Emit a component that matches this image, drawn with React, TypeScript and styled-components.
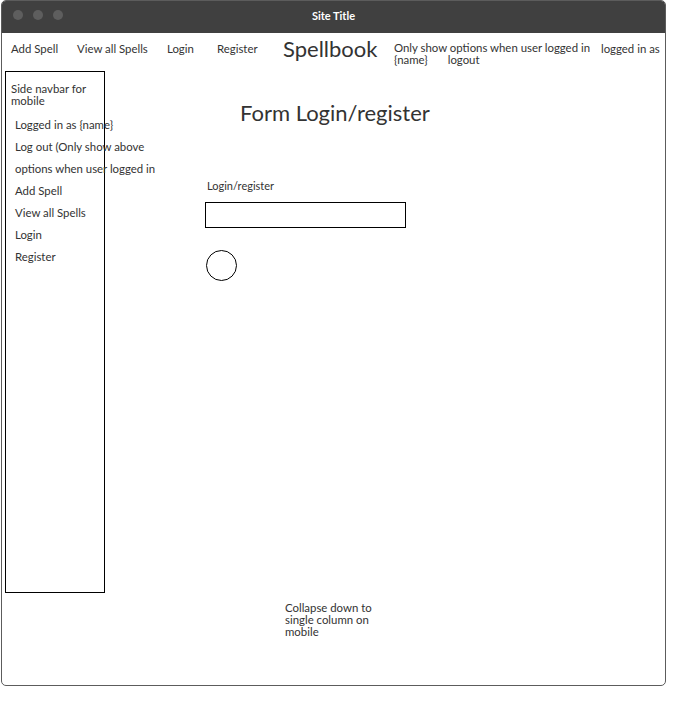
import React from "react";
import styled, { createGlobalStyle } from "styled-components";

const Global = createGlobalStyle`
  html, body { margin: 0; padding: 0; background: #ffffff; }
  body { font-family: Lato, "Noto Sans", sans-serif; color: #333333; }
`;

const Window = styled.div`
  margin-left: 1px;
  width: 665px;
  height: 686px;
  box-sizing: border-box;
  border: 1px solid #5c5c5c;
  border-radius: 5px;
  overflow: hidden;
  display: flex;
  flex-direction: column;
  background: #fff;
`;

const TitleBar = styled.div`
  height: 32px;
  flex: none;
  box-sizing: border-box;
  padding-bottom: 3px;
  background: #404040;
  position: relative;
  display: flex;
  align-items: center;
  justify-content: center;
`;

const Dots = styled.div`
  position: absolute;
  left: 11px;
  top: 9px;
  display: flex;
  gap: 10px;
`;

const Dot = styled.span`
  width: 10px;
  height: 10px;
  border-radius: 50%;
  background: #5e5e5e;
`;

const TitleText = styled.span`
  color: #ffffff;
  font-size: 11px;
  font-weight: 700;
`;

const NavRow = styled.div`
  height: 31px;
  flex: none;
  display: flex;
  align-items: center;
  padding-left: 9px;
`;

const NavItem = styled.div<{ $w: number }>`
  width: ${(p) => p.$w}px;
  flex: none;
  font-size: 11.4px;
  line-height: 14px;
  white-space: nowrap;
`;

const Brand = styled.div<{ $w: number }>`
  width: ${(p) => p.$w}px;
  flex: none;
  font-size: 22px;
  line-height: 26px;
  white-space: nowrap;
`;

const Note = styled.div<{ $w: number }>`
  width: ${(p) => p.$w}px;
  flex: none;
  align-self: flex-start;
  margin-top: 9px;
  font-size: 11.4px;
  line-height: 12px;
  white-space: nowrap;
`;

const NoteLine2 = styled.div`
  display: flex;
  gap: 20px;
`;

const Body = styled.div`
  margin-top: 7px;
  display: flex;
  align-items: flex-start;
`;

const Sidebar = styled.div`
  margin-left: 3px;
  width: 100px;
  height: 522px;
  box-sizing: border-box;
  border: 1px solid #000;
  flex: none;
  padding: 11px 0 0 5px;
`;

const SideHeader = styled.div`
  font-size: 11.4px;
  line-height: 12px;
  margin-bottom: 7px;
`;

const SideItem = styled.div`
  font-size: 11.4px;
  line-height: 22px;
  margin-left: 4px;
  white-space: nowrap;
`;

const Main = styled.div`
  padding-left: 100px;
  display: flex;
  flex-direction: column;
  align-items: flex-start;
`;

const Heading = styled.h1`
  margin: 29px 0 0 35px;
  font-size: 22px;
  line-height: 26px;
  font-weight: 400;
`;

const Label = styled.div`
  margin: 53px 0 0 2px;
  font-size: 11px;
  line-height: 14px;
`;

const Input = styled.div`
  margin-top: 9px;
  width: 201px;
  height: 26px;
  box-sizing: border-box;
  border: 1px solid #000;
`;

const Radio = styled.div`
  margin: 22px 0 0 1px;
  width: 31px;
  height: 31px;
  box-sizing: border-box;
  border: 1px solid #000;
  border-radius: 50%;
`;

const Footer = styled.div`
  margin: 9px 0 0 283px;
  width: 95px;
  font-size: 11.4px;
  line-height: 12px;
`;

export default function App() {
  return (
    <>
      <Global />
      <Window>
        <TitleBar>
          <Dots>
            <Dot />
            <Dot />
            <Dot />
          </Dots>
          <TitleText>Site Title</TitleText>
        </TitleBar>
        <NavRow>
          <NavItem $w={66}>Add Spell</NavItem>
          <NavItem $w={90}>View all Spells</NavItem>
          <NavItem $w={50}>Login</NavItem>
          <NavItem $w={66}>Register</NavItem>
          <Brand $w={111}>Spellbook</Brand>
          <Note $w={207}>
            <div>Only show options when user logged in</div>
            <NoteLine2>
              <span>{"{name}"}</span>
              <span>logout</span>
            </NoteLine2>
          </Note>
          <NavItem $w={60}>logged in as</NavItem>
        </NavRow>
        <Body>
          <Sidebar>
            <SideHeader>
              Side navbar for
              <br />
              mobile
            </SideHeader>
            <SideItem>Logged in as {"{name}"}</SideItem>
            <SideItem>Log out (Only show above</SideItem>
            <SideItem>options when user logged in</SideItem>
            <SideItem>Add Spell</SideItem>
            <SideItem>View all Spells</SideItem>
            <SideItem>Login</SideItem>
            <SideItem>Register</SideItem>
          </Sidebar>
          <Main>
            <Heading>Form Login/register</Heading>
            <Label>Login/register</Label>
            <Input />
            <Radio />
          </Main>
        </Body>
        <Footer>Collapse down to single column on mobile</Footer>
      </Window>
    </>
  );
}
